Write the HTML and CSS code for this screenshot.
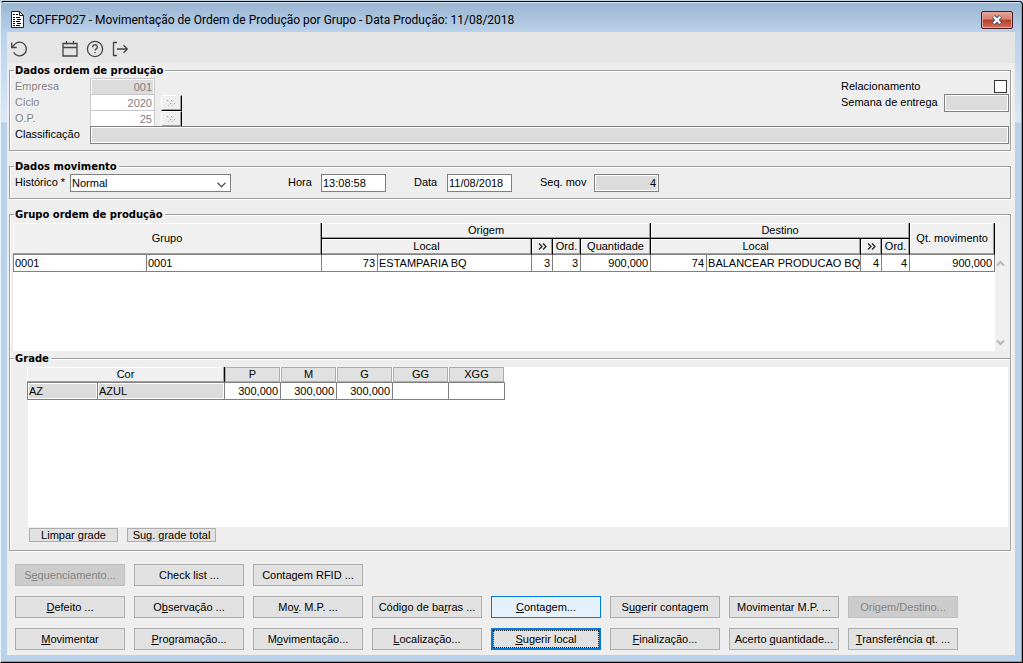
FILE: index.html
```html
<!DOCTYPE html>
<html lang="pt-BR">
<head>
    <meta charset="UTF-8">
    <meta name="viewport" content="width=device-width, initial-scale=1.0">
    <title>CDFFP027 - Movimentação de Ordem de Produção por Grupo</title>
    <link rel="stylesheet" href="styles.css">
</head>
<body>
<div class="window">

    <!-- Title bar -->
    <div class="titlebar">
        <svg class="doc-icon" width="13" height="17" viewBox="0 0 13 17">
            <path d="M0.5 0.5H8.5L12.5 4.5V16.5H0.5Z" fill="#fff" stroke="#222"/>
            <path d="M8.5 0.5V4.5H12.5" fill="none" stroke="#222"/>
            <path d="M2 3.5H4M5 3.5H7M2 6.5H4M5 6.5H9M2 8.5H4M6 8.5H10M2 10.5H4M5 10.5H9M2 12.5H4M6 12.5H10M2 14.5H4M5 14.5H9" stroke="#000"/>
        </svg>
        <span class="title">CDFFP027 - Movimentação de Ordem de Produção por Grupo - Data Produção: 11/08/2018</span>
        <button class="close-btn" type="button" aria-label="Fechar">
            <svg width="12" height="10" viewBox="0 0 12 10">
                <path d="M2.5 1.5L9.5 8.5M9.5 1.5L2.5 8.5" stroke="#4a5668" stroke-width="4.4"/>
                <path d="M2.7 1.7L9.3 8.3M9.3 1.7L2.7 8.3" stroke="#fff" stroke-width="2.3"/>
            </svg>
        </button>
    </div>

    <div class="content">
        <!-- Toolbar -->
        <div class="toolbar">
            <button class="tool tool-undo" type="button" aria-label="Desfazer">
                <svg width="18" height="18" viewBox="0 0 18 18"><path d="M1.7 2.5V7.5H6.7M2 7.2L4.6 4.4A6.8 6.8 0 1 1 3.6 12.2" /></svg>
            </button>
            <button class="tool" type="button" aria-label="Calendário">
                <svg width="18" height="18" viewBox="0 0 18 18"><path d="M2 3.5H16V16H2ZM2 7.5H16M5.5 1V4.5M12.5 1V4.5"/></svg>
            </button>
            <button class="tool" type="button" aria-label="Ajuda">
                <svg width="18" height="18" viewBox="0 0 18 18"><circle cx="9" cy="9" r="7.6"/><path d="M6.7 7.2A2.3 2.3 0 1 1 9.8 9.2Q9 9.6 9 10.6M9 12V13.3"/></svg>
            </button>
            <button class="tool" type="button" aria-label="Sair">
                <svg width="18" height="18" viewBox="0 0 18 18"><path d="M6 2.5H2.5V15.5H6M6 9H16.2M12.5 5.2L16.3 9L12.5 12.8"/></svg>
            </button>
        </div>

        <fieldset class="group">
            <legend>Dados ordem de produção</legend>
            <div class="row">
                <label class="label disabled" for="empresa">Empresa</label>
                <input class="field dim gray num" id="empresa" type="text" value="001" disabled>
                <label class="label label-right" for="relacionamento">Relacionamento</label>
                <span class="check-cell"><input class="check" id="relacionamento" type="checkbox"></span>
            </div>
            <div class="row">
                <label class="label disabled" for="ciclo">Ciclo</label>
                <input class="field dim num" id="ciclo" type="text" value="2020" disabled>
                <button class="lookup" type="button" disabled aria-label="Buscar ciclo">
                    <svg width="11" height="8" viewBox="0 0 11 8"><path d="M1 1L3 3M5 1L7 3M5 4L2 7M9 4L6 7"/></svg>
                </button>
                <label class="label label-right" for="semana">Semana de entrega</label>
                <input class="field gray" id="semana" type="text" readonly>
            </div>
            <div class="row">
                <label class="label disabled" for="op">O.P.</label>
                <input class="field dim num" id="op" type="text" value="25" disabled>
                <button class="lookup" type="button" disabled aria-label="Buscar O.P.">
                    <svg width="11" height="8" viewBox="0 0 11 8"><path d="M1 1L3 3M5 1L7 3M5 4L2 7M9 4L6 7"/></svg>
                </button>
            </div>
            <div class="row">
                <label class="label" for="classificacao">Classificação</label>
                <input class="field gray wide" id="classificacao" type="text" readonly>
            </div>
        </fieldset>

        <fieldset class="group">
            <legend>Dados movimento</legend>
            <div class="row row-mov">
                <div class="pair">
                    <label class="label-hist" for="historico">Histórico *</label>
                    <span class="select-box">
                        <select id="historico"><option>Normal</option></select>
                        <svg width="9" height="6" viewBox="0 0 9 6"><path d="M0.5 0.8L4.5 4.8L8.5 0.8"/></svg>
                    </span>
                </div>
                <div class="pair pair-hora">
                    <label class="label-short" for="hora">Hora</label>
                    <input class="field" id="hora" type="text" value="13:08:58">
                </div>
                <div class="pair">
                    <label class="label-short" for="data">Data</label>
                    <input class="field" id="data" type="text" value="11/08/2018">
                </div>
                <div class="pair">
                    <label class="label-seq" for="seq">Seq. mov</label>
                    <input class="field gray num" id="seq" type="text" value="4" readonly>
                </div>
            </div>
        </fieldset>

        <fieldset class="group group-main">
            <legend>Grupo ordem de produção</legend>
            <div class="list">
                <div class="list-body">
                    <table class="grid">
                        <colgroup>
                            <col class="c-grupo"><col class="c-desc">
                            <col class="c-cod"><col class="c-local"><col class="c-seq"><col class="c-ord"><col class="c-qtd">
                            <col class="c-cod"><col class="c-local"><col class="c-seq"><col class="c-ord">
                            <col class="c-mov">
                        </colgroup>
                        <thead>
                            <tr>
                                <th colspan="2" rowspan="2">Grupo</th>
                                <th colspan="5">Origem</th>
                                <th colspan="4">Destino</th>
                                <th rowspan="2">Qt. movimento</th>
                            </tr>
                            <tr>
                                <th colspan="2">Local</th>
                                <th><svg class="arrows" width="9" height="7" viewBox="0 0 9 7"><path d="M1 0.5L4 3.5L1 6.5M5 0.5L8 3.5L5 6.5"/></svg></th>
                                <th>Ord.</th>
                                <th>Quantidade</th>
                                <th colspan="2">Local</th>
                                <th><svg class="arrows" width="9" height="7" viewBox="0 0 9 7"><path d="M1 0.5L4 3.5L1 6.5M5 0.5L8 3.5L5 6.5"/></svg></th>
                                <th>Ord.</th>
                            </tr>
                        </thead>
                        <tbody>
                            <tr>
                                <td>0001</td>
                                <td>0001</td>
                                <td class="num">73</td>
                                <td>ESTAMPARIA BQ</td>
                                <td class="num">3</td>
                                <td class="num">3</td>
                                <td class="num">900,000</td>
                                <td class="num">74</td>
                                <td>BALANCEAR PRODUCAO BQ</td>
                                <td class="num">4</td>
                                <td class="num">4</td>
                                <td class="num">900,000</td>
                            </tr>
                        </tbody>
                    </table>
                </div>
                <div class="scrollbar">
                    <svg width="9" height="7" viewBox="0 0 9 7"><path d="M1 5.5L4.5 2L8 5.5"/></svg>
                    <svg width="9" height="7" viewBox="0 0 9 7"><path d="M1 1.5L4.5 5L8 1.5"/></svg>
                </div>
            </div>

            <fieldset class="subgroup">
                <legend>Grade</legend>
                <div class="grade-body">
                    <table class="grid grid-grade">
                        <colgroup>
                            <col class="g-cod"><col class="g-cor">
                            <col class="g-tam"><col class="g-tam"><col class="g-tam"><col class="g-tam"><col class="g-tam">
                        </colgroup>
                        <thead>
                            <tr>
                                <th colspan="2">Cor</th>
                                <th class="size"><button type="button">P</button></th>
                                <th class="size"><button type="button">M</button></th>
                                <th class="size"><button type="button">G</button></th>
                                <th class="size"><button type="button">GG</button></th>
                                <th class="size"><button type="button">XGG</button></th>
                            </tr>
                        </thead>
                        <tbody>
                            <tr>
                                <td class="locked">AZ</td>
                                <td class="locked">AZUL</td>
                                <td class="num">300,000</td>
                                <td class="num">300,000</td>
                                <td class="num">300,000</td>
                                <td></td>
                                <td></td>
                            </tr>
                        </tbody>
                    </table>
                </div>
                <div class="grade-actions">
                    <button type="button">Limpar grade</button>
                    <button type="button">Sug. grade total</button>
                </div>
            </fieldset>
        </fieldset>

        <!-- Action buttons -->
        <div class="actions">
            <div class="actions-row">
                <button type="button" disabled>S<u>e</u>quenciamento...</button>
                <button type="button">Check list ...</button>
                <button type="button">Contagem RFID ...</button>
            </div>
            <div class="actions-row">
                <button type="button"><u>D</u>efeito ...</button>
                <button type="button">O<u>b</u>servação ...</button>
                <button type="button">Mo<u>v</u>. M.P. ...</button>
                <button type="button">Código de ba<u>r</u>ras ...</button>
                <button class="hot" type="button"><u>C</u>ontagem...</button>
                <button type="button">S<u>u</u>gerir contagem</button>
                <button type="button">Movimentar M.P. ...</button>
                <button type="button" disabled>Ori<u>g</u>em/Destino...</button>
            </div>
            <div class="actions-row">
                <button type="button"><u>M</u>ovimentar</button>
                <button type="button"><u>P</u>rogramação...</button>
                <button type="button">M<u>o</u>vimentação...</button>
                <button type="button"><u>L</u>ocalização...</button>
                <button class="default" type="button"><u>S</u>ugerir local</button>
                <button type="button"><u>F</u>inalização...</button>
                <button type="button">Acerto <u>q</u>uantidade...</button>
                <button type="button"><u>T</u>ransferência qt. ...</button>
            </div>
        </div>
    </div>
</div>
</body>
</html>
```
FILE: styles.css
```css
* {
    box-sizing: border-box;
    margin: 0;
    padding: 0;
}

body {
    background: #c8d6e6;
    padding-top: 1px;
    font-family: "Liberation Sans", Arial, sans-serif;
    font-size: 11px;
    line-height: 16px;
    color: #000;
}

button, input, select {
    font: inherit;
    color: inherit;
}

/* Window frame */
.window {
    display: flex;
    flex-direction: column;
    min-height: calc(100vh - 1px);
    padding: 0 6px 7px;
    border: 1px solid #000;
    border-left-color: #e9f3fc;
    border-top-left-radius: 4px;
    border-top-right-radius: 4px;
    box-shadow: inset -1px -1px 0 #35c5e0, inset 0 1px 0 #d9ecfa;
    background: linear-gradient(#99b4d1 0, #b9d1ea 30px, #dbe8f6 120px, #b9d1ea 121px);
}

.titlebar {
    display: flex;
    align-items: center;
    height: 30px;
    padding: 5px 3px 0 4px;
}

.doc-icon {
    margin-right: 5px;
}

.title {
    flex: 1;
    font-family: Roboto, "Segoe UI", sans-serif;
    font-size: 12px;
    white-space: nowrap;
}

.close-btn {
    display: flex;
    align-items: center;
    justify-content: center;
    width: 32px;
    height: 18px;
    border: 1px solid #4c1a24;
    border-radius: 2px;
    box-shadow: inset 0 0 0 1px #e6a69c;
    background: linear-gradient(#e7a596 0, #d4816f 45%, #b53c26 50%, #d0705c 100%);
}

.content {
    display: flex;
    flex-direction: column;
    flex: 1;
    margin-right: 1px;
    background: #eee;
}

/* Toolbar */
.toolbar {
    display: flex;
    align-items: center;
    gap: 7px;
    height: 31px;
    padding: 3px 3px 0;
    background: #e5e5e5;
}

.tool {
    width: 18px;
    height: 18px;
    border: none;
    background: none;
}

.tool-undo {
    margin-right: 26px;
}

.tool svg {
    display: block;
    fill: none;
    stroke: #444;
    stroke-width: 1.3;
}

/* Groups */
.group {
    min-width: 0;
    margin: 0 4px 8px 2px;
    padding: 0 1px 8px 5px;
    border: 1px solid #a0a0a0;
    box-shadow: 1px 1px 0 #fff, inset 1px 1px 0 #fff;
}

legend {
    height: 15px;
    padding: 0 2px 0 1px;
    background: #eee;
    font-family: "DejaVu Sans", Verdana, sans-serif;
    font-size: 10px;
    font-weight: bold;
    line-height: 15px;
}

.group > legend {
    margin-left: -1px;
}

.row {
    display: flex;
    align-items: flex-start;
    height: 16px;
}

.label {
    flex: none;
    width: 75px;
}

.label.disabled {
    color: #808080;
    text-shadow: 1px 1px 0 #fff;
}

.label-right {
    width: 103px;
    margin-left: auto;
}

.field {
    width: 65px;
    height: 18px;
    padding: 0 2px 0 1px;
    border: 1px solid #808080;
    border-radius: 0;
    background: #fff;
    box-shadow: inset 0 0 0 1px #fff;
}

.field.gray {
    background: #dcdcdc;
}

.field.dim {
    border-color: #c8c8c8;
    color: #808080;
}

.field.wide {
    flex: 1;
}

.num {
    text-align: right;
}

.check-cell {
    display: flex;
    justify-content: flex-end;
    width: 65px;
    padding: 2px 2px 0 0;
}

.check {
    appearance: none;
    width: 13px;
    height: 13px;
    border: 1px solid #333;
    background: #fff;
}

.check:checked {
    background: #333;
}

.lookup {
    display: flex;
    align-items: center;
    justify-content: center;
    width: 21px;
    height: 16px;
    margin: 1px 0 0 6px;
    border: 1px solid #000;
    border-color: #fff #000 #000 #fff;
    box-shadow: inset -1px -1px 0 #a0a0a0;
    background: #eee;
}

.lookup svg {
    fill: none;
    stroke: #a0a0a0;
    stroke-dasharray: 1.4 1;
}

.row-mov {
    gap: 28px;
}

.pair {
    display: flex;
}

.pair-hora {
    margin-left: 29px;
}

.label-hist {
    width: 55px;
}

.label-short {
    width: 33px;
}

.label-seq {
    width: 54px;
}

.select-box {
    position: relative;
    width: 161px;
    height: 18px;
}

.select-box select {
    display: block;
    appearance: none;
    width: 100%;
    height: 100%;
    padding: 0 1px;
    border: 1px solid #808080;
    border-radius: 0;
    background: #fff;
}

.select-box svg {
    position: absolute;
    right: 5px;
    top: 8px;
    fill: none;
    stroke: #555;
    stroke-width: 1.3;
    pointer-events: none;
}

/* Group list */
.group-main {
    display: flex;
    flex-direction: column;
    flex: 1;
    margin-bottom: 13px;
    padding: 0;
}

.group-main > legend {
    margin-left: 4px;
}

.list {
    display: flex;
    height: 128px;
    margin: 1px 1px 0 3px;
}

.list-body {
    flex: 1;
    background: #fff;
}

.scrollbar {
    display: flex;
    flex-direction: column;
    justify-content: space-between;
    width: 14px;
    padding: 37px 0 5px 1px;
    background: #f0f0f0;
}

.scrollbar svg {
    fill: none;
    stroke: #b8b8b8;
    stroke-width: 2;
}

.grid {
    table-layout: fixed;
    width: 982px;
    border-collapse: separate;
    border-spacing: 0;
}

.c-grupo { width: 134px; }
.c-desc { width: 175px; }
.c-cod { width: 56px; }
.c-local { width: 154px; }
.c-seq { width: 21px; }
.c-ord { width: 28px; }
.c-qtd { width: 70px; }
.c-mov { width: 85px; }

.grid th {
    height: 16px;
    border-right: 1px solid #000;
    border-bottom: 1px solid #000;
    box-shadow: inset -1px -1px 0 #a0a0a0, inset 1px 1px 0 #fff;
    background: #f0f0f0;
    font-weight: normal;
    line-height: 15px;
    white-space: nowrap;
}

.grid tr:last-child th,
.grid th[rowspan] {
    border-bottom-color: #808080;
}

.arrows {
    fill: none;
    stroke: #222;
    stroke-width: 1.3;
}

.grid td {
    height: 17px;
    padding: 0 1px;
    border-right: 1px solid #808080;
    border-bottom: 1px solid #808080;
    line-height: 16px;
    white-space: nowrap;
}

.grid td:first-child {
    border-left: 1px solid #808080;
}

.grid td.num {
    padding-right: 2px;
}

/* Grade */
.subgroup {
    display: flex;
    flex-direction: column;
    flex: 1;
    min-width: 0;
    padding: 0 2px 8px 17px;
    border: none;
    border-top: 1px solid #a0a0a0;
    box-shadow: inset 0 1px 0 #fff;
}

.subgroup > legend {
    margin-left: -13px;
}

.grade-body {
    flex: 1;
    min-height: 160px;
    margin: 1px 0 0 1px;
    background: #fff;
}

.grid-grade {
    width: 478px;
    margin-left: -1px;
}

.g-cod { width: 71px; }
.g-cor { width: 127px; }
.g-tam { width: 56px; }

.grid-grade td {
    height: 18px;
    border-top: 1px solid #808080;
}

.grid-grade th {
    height: 15px;
}

.grid-grade tr:last-child th {
    border-bottom: none;
}

.grid-grade th.size {
    padding: 0 1px 0 0;
    border-right: none;
    box-shadow: none;
    background: #fff;
}

.size button {
    display: block;
    width: 100%;
    height: 15px;
    border: 1px solid #adadad;
    background: #e1e1e1;
    line-height: 13px;
}

.grid td.locked {
    background: #dcdcdc;
    box-shadow: inset 0 0 0 1px #fff;
}

.grade-actions {
    display: flex;
    gap: 9px;
    padding: 1px 2px 0;
}

.grade-actions button {
    width: 89px;
    height: 14px;
    border: 1px solid #adadad;
    background: #e1e1e1;
    line-height: 12px;
}

/* Action buttons */
.actions {
    display: flex;
    flex-direction: column;
    gap: 10px;
    padding: 0 8px 5px;
}

.actions-row {
    display: flex;
    gap: 9px;
}

.actions button {
    width: 110px;
    height: 22px;
    border: 1px solid #adadad;
    background: #e1e1e1;
    line-height: 18px;
    white-space: nowrap;
}

.actions button:disabled {
    border-color: #bfbfbf;
    background: #ccc;
    color: #838383;
}

.actions .hot {
    border-color: #0078d7;
    background: #e5f1fb;
}

.actions .default {
    border: 2px solid #0078d7;
    outline: 1px dotted #000;
    outline-offset: -3px;
}
```
